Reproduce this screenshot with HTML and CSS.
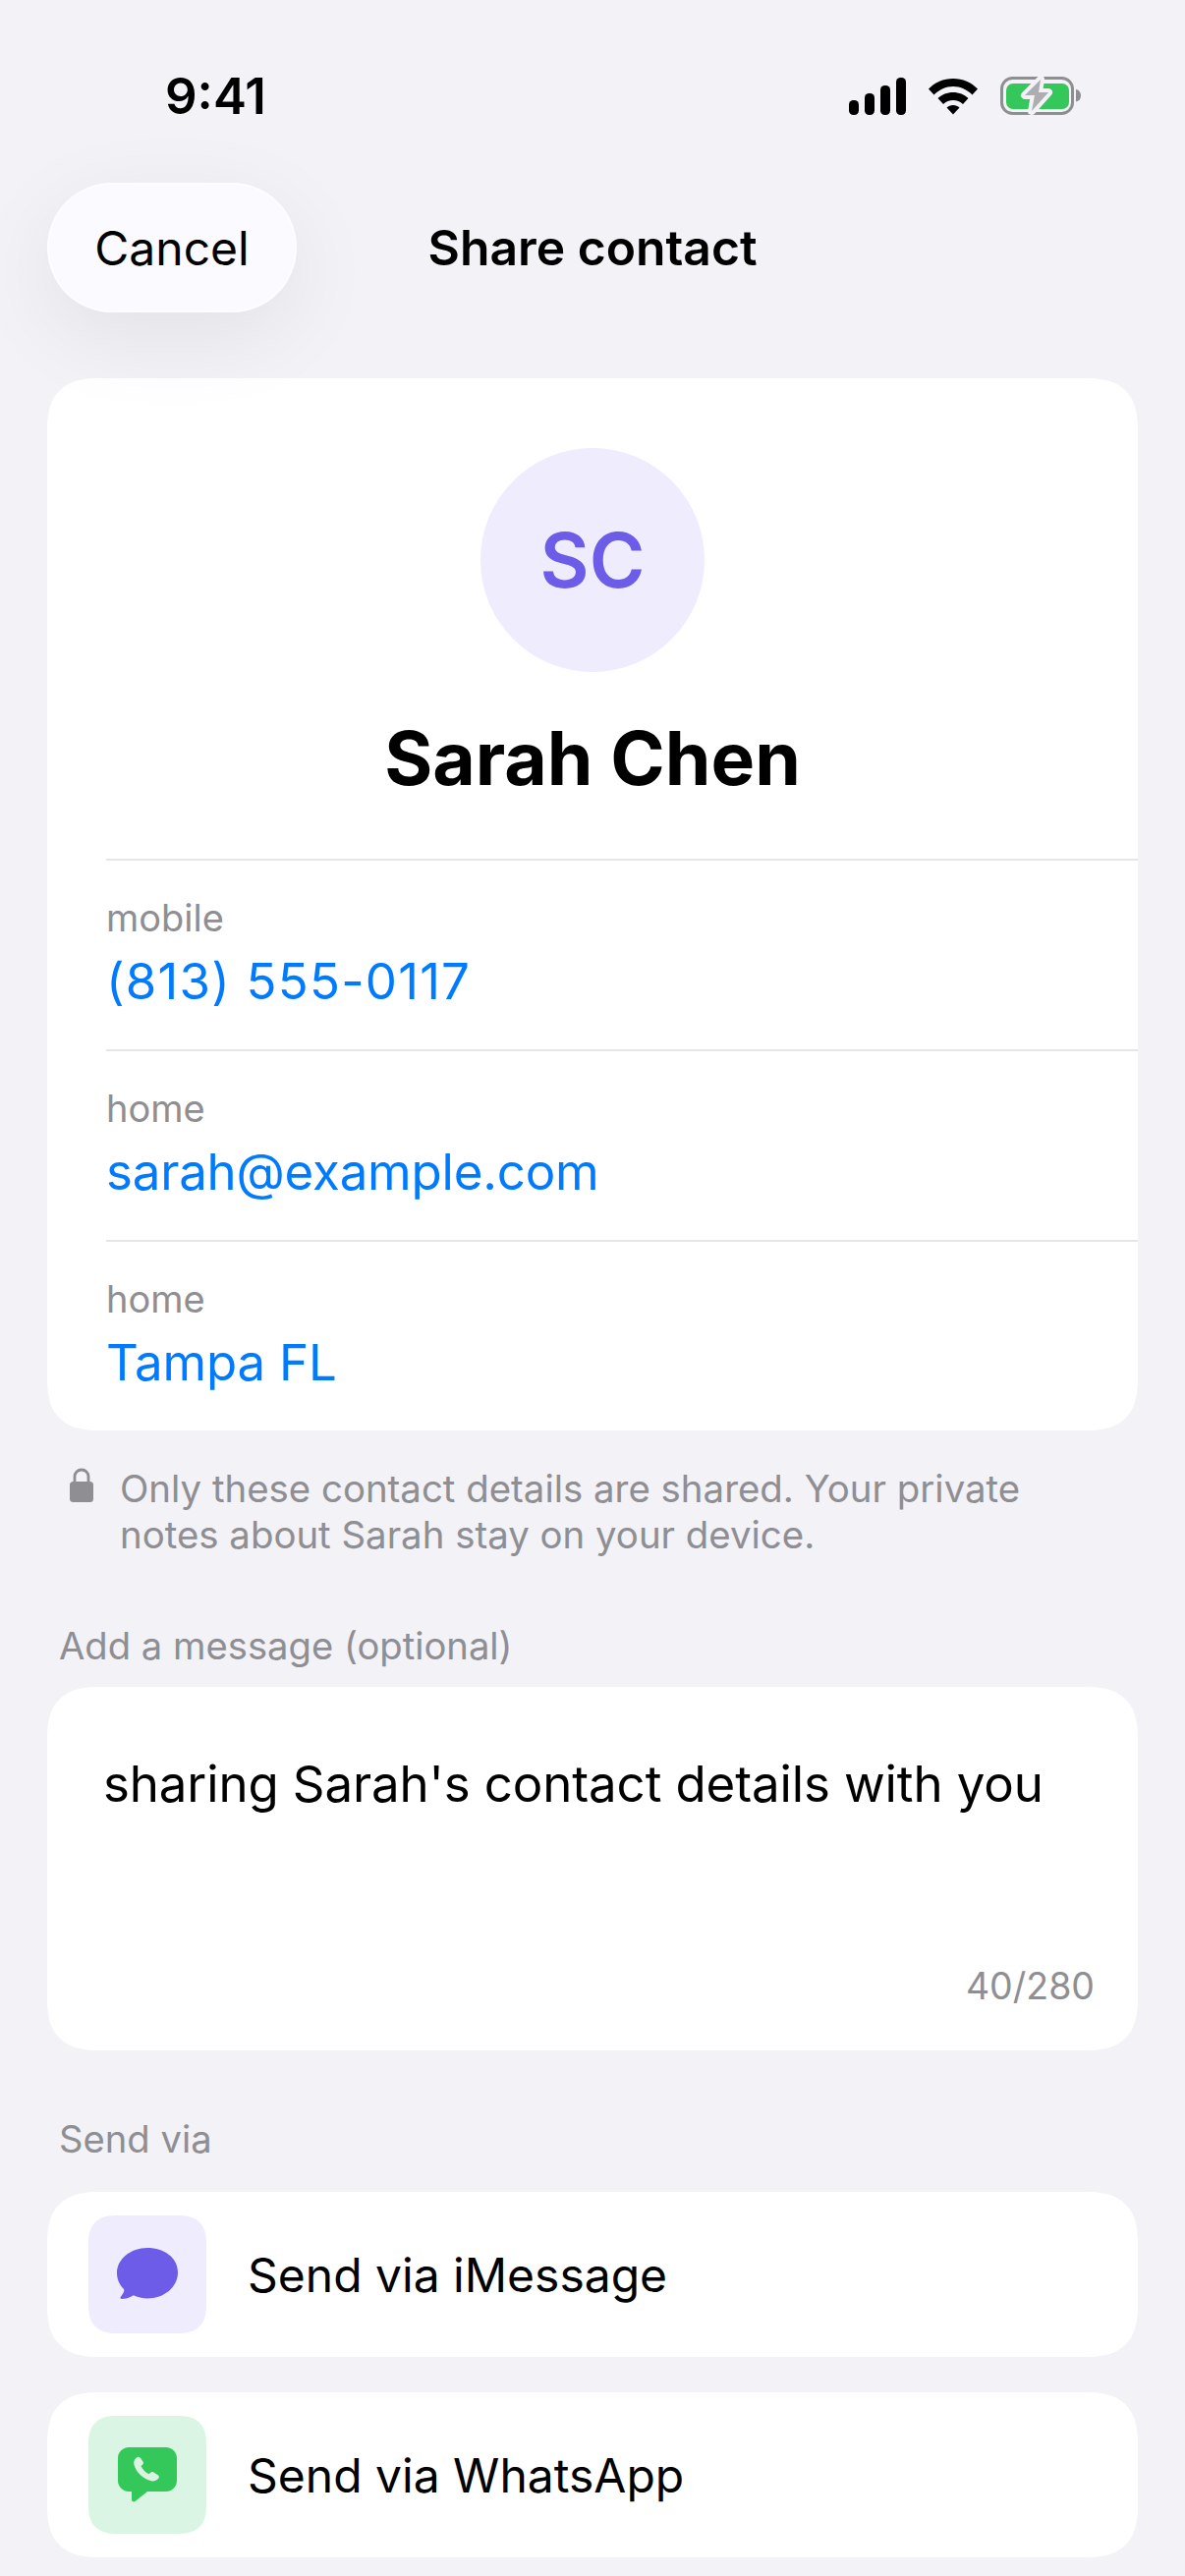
FILE: index.html
```html
<!DOCTYPE html>
<html lang="en">
<head>
    <meta charset="UTF-8">
    <meta name="viewport" content="width=device-width, initial-scale=1.0">
    <title>Share contact</title>
    <link rel="stylesheet" href="styles.css">
</head>
<body>

<div class="status-bar">
    <span class="time">9:41</span>
    <div class="status-icons">
        <svg class="signal" width="58" height="38" viewBox="0 0 58 38">
            <rect x="0" y="23" width="10" height="15" rx="4.5"/>
            <rect x="16" y="16" width="10" height="22" rx="4.5"/>
            <rect x="32" y="8" width="10" height="30" rx="4.5"/>
            <rect x="48" y="0" width="10" height="38" rx="4.5"/>
        </svg>
        <svg class="wifi" width="52" height="38" viewBox="0 0 52 38">
            <path d="M1 11.500C7.500 5 16 1 26 1s18.500 4 25 10.500l-5.500 6C40 12.200 33.500 9 26 9S12 12.200 6.500 17.500z"/>
            <path d="M10.500 21C14.500 17.200 20 15 26 15s11.500 2.200 15.500 6l-5.500 6c-2.700-2.500-6.200-4-10-4s-7.300 1.500-10 4z"/>
            <path d="M19.500 30.500c1.700-1.500 4-2.500 6.500-2.500s4.800 1 6.500 2.500L26 37.500z"/>
        </svg>
        <svg class="battery" width="82" height="44" viewBox="0 0 82 44">
            <rect x="1.500" y="3.500" width="72" height="36" rx="11" fill="none" stroke="#8e8e93" stroke-width="3"/>
            <rect x="6" y="9" width="64" height="26" rx="7" fill="#34c759"/>
            <path d="M77 15c3 .5 5 3 5 6.500s-2 5.500-5 6z" fill="#8e8e93"/>
            <path d="M41 5 L25 21 H35 L32 37 L49 18 H39z" fill="#aeaeb2" stroke="#f2f2f7" stroke-width="8" stroke-linejoin="round" paint-order="stroke"/>
        </svg>
    </div>
</div>

<div class="nav">
    <button class="cancel">Cancel</button>
    <h1 class="nav-title">Share contact</h1>
</div>

<div class="card contact">
    <div class="avatar">SC</div>
    <h2 class="name">Sarah Chen</h2>
    <div class="field">
        <div class="field-label">mobile</div>
        <div class="field-value phone">(813) 555-0117</div>
    </div>
    <div class="field">
        <div class="field-label">home</div>
        <div class="field-value">sarah@example.com</div>
    </div>
    <div class="field">
        <div class="field-label">home</div>
        <div class="field-value">Tampa FL</div>
    </div>
</div>

<div class="privacy">
    <svg class="lock" width="26" height="36" viewBox="0 0 26 36">
        <path d="M6 15V9a7 7 0 0 1 14 0v6" fill="none" stroke="#8e8e93" stroke-width="2.800"/>
        <rect x="1" y="14" width="24" height="21" rx="3.500" fill="#8e8e93"/>
    </svg>
    <p>Only these contact details are shared. Your private notes about Sarah stay on your device.</p>
</div>

<div class="section-label message-label">Add a message (optional)</div>
<div class="card message">
    <div class="message-text">sharing Sarah's contact details with you</div>
    <div class="counter">40/280</div>
</div>

<div class="section-label send-label">Send via</div>
<div class="card send-row">
    <div class="send-icon imessage">
        <svg width="64" height="54" viewBox="0 0 64 54">
            <path d="M32 0C15 0 1 11.500 1 25.500c0 6.500 2.500 12 7 16.500 1 1.500-.5 4.500-3 7.500-1 1.200-.5 2.500 1 2.500 3.500 0 7.500-1 10.500-3 1-.6 2-.6 3 0 4 1.500 8 2.500 12.500 2.500 17 0 31-11.500 31-26.500S49 0 32 0z" fill="#6c5ce7"/>
        </svg>
    </div>
    <span class="send-text">Send via iMessage</span>
</div>
<div class="card send-row">
    <div class="send-icon whatsapp">
        <svg width="60" height="56" viewBox="0 0 60 56">
            <path d="M11 0h38c6 0 11 5 11 11v23c0 6-5 11-11 11H30L17.500 55c-1.500 1-3.500 0-3.500-2v-8h-3C5 45 0 40 0 34V11C0 5 5 0 11 0z" fill="#34c759"/>
            <path d="M19 10.500c1.500-1.200 3-1 4 .5l2.500 3.500c.8 1.200.5 2.300-.5 3.200l-1.500 1.300c1.500 3.500 4.500 6.700 8 8.300l1.700-1.500c1-.9 2-1 3.200-.3l4.300 2.700c1.500 1 1.500 2.700.3 3.900-1.800 1.800-4.500 2.700-7 2.100C26 32.500 18.500 25.500 16.500 18c-.8-2.800 0-5.700 2.500-7.500z" fill="#d9f4e2"/>
        </svg>
    </div>
    <span class="send-text">Send via WhatsApp</span>
</div>

</body>
</html>
```

FILE: styles.css
```css
html, body {
    height: 2622px;
    overflow: hidden;
}
body {
    margin: 0;
    padding: 0 48px;
    background-color: #f2f2f7;
    color: #000;
    font-family: Inter, "Liberation Sans", sans-serif;
}
.status-bar {
    height: 186px;
    margin: 0 -48px;
    padding: 0 106px 0 168px;
    box-sizing: border-box;
    display: flex;
    justify-content: space-between;
    align-items: flex-start;
}
.time {
    margin-top: 68px;
    font-size: 51px;
    line-height: 60px;
    font-weight: 600;
}
.status-icons {
    margin-top: 76px;
    display: flex;
    align-items: center;
    gap: 22px;
}
.nav {
    height: 132px;
    margin-bottom: 67px;
    display: flex;
    align-items: center;
    justify-content: center;
    position: relative;
}
.cancel {
    position: absolute;
    left: 0;
    top: 0;
    width: 254px;
    height: 132px;
    border: none;
    border-radius: 66px;
    background-color: #fbfaff;
    color: #000;
    font-family: inherit;
    font-size: 48px;
    box-shadow: inset 0 0 0 2px rgba(255, 255, 255, 0.6), 0 24px 90px rgba(0, 0, 0, 0.07);
}
.nav-title {
    margin: 0;
    font-size: 49.8px;
    font-weight: 600;
}
.card {
    background-color: #fff;
    border-radius: 54px;
    corner-shape: superellipse(1.4);
}
.contact {
    height: 1071px;
    padding: 71px 0 0 60px;
    box-sizing: border-box;
}
.avatar {
    width: 228px;
    height: 228px;
    margin: 0 auto 0 381px;
    border-radius: 50%;
    background-color: #eeecfd;
    color: #6c5ce7;
    font-size: 77px;
    font-weight: 600;
    display: flex;
    align-items: center;
    justify-content: center;
}
.name {
    margin: 40px 0 54px -60px;
    text-align: center;
    font-size: 75px;
    line-height: 96px;
    font-weight: 700;
}
.field {
    height: 194px;
    border-top: 2px solid #e5e5ea;
    padding-top: 34px;
    box-sizing: border-box;
}
.field-label {
    font-size: 38px;
    line-height: 48px;
    color: #8e8e93;
}
.field-value {
    margin-top: 8px;
    font-size: 51px;
    line-height: 66px;
    letter-spacing: -0.2px;
    color: #007aff;
}
.phone {
    letter-spacing: 1.2px;
}
.privacy {
    margin: 36px 0 0 22px;
    display: flex;
    align-items: flex-start;
    gap: 26px;
}
.lock {
    flex: none;
    margin-top: 2px;
}
.privacy p {
    margin: 0;
    width: 960px;
    font-size: 38.4px;
    line-height: 47px;
    color: #8e8e93;
}
.section-label {
    margin-left: 12px;
    font-size: 38.2px;
    line-height: 48px;
    color: #8e8e93;
}
.message-label {
    margin-top: 65px;
}
.message {
    height: 370px;
    margin-top: 18px;
    padding: 66px 44px 0 57px;
    box-sizing: border-box;
}
.message-text {
    font-size: 51px;
    line-height: 66px;
    letter-spacing: -0.12px;
}
.counter {
    margin-top: 149px;
    text-align: right;
    font-size: 37.5px;
    line-height: 48px;
    color: #8e8e93;
}
.send-label {
    margin-top: 66px;
}
.send-row {
    height: 168px;
    margin-top: 30px;
    padding-left: 42px;
    box-sizing: border-box;
    display: flex;
    align-items: center;
    gap: 42px;
}
.send-row + .send-row {
    margin-top: 36px;
}
.send-icon {
    width: 120px;
    height: 120px;
    border-radius: 30px;
    corner-shape: superellipse(1.4);
    display: flex;
    align-items: center;
    justify-content: center;
}
.imessage {
    background-color: #eeecfd;
}
.whatsapp {
    background-color: #daf5e3;
}
.send-text {
    font-size: 48px;
}
```
